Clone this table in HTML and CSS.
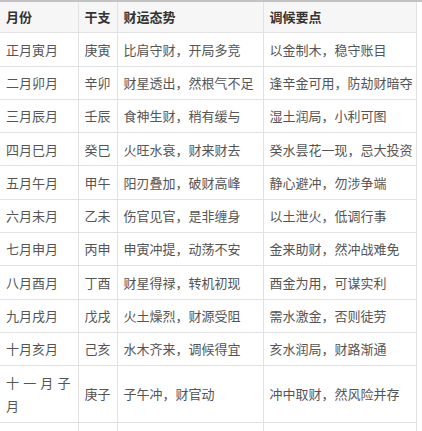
FILE: index.html
```html
<!DOCTYPE html>
<html lang="zh-CN">
<head>
<meta charset="utf-8">
<link rel="stylesheet" href="styles.css">
</head>
<body>
<div class="page">
<table class="fortune">
  <colgroup>
    <col class="c-month"><col class="c-gz"><col class="c-trend"><col class="c-tip">
  </colgroup>
  <thead>
    <tr><th>月份</th><th>干支</th><th>财运态势</th><th>调候要点</th></tr>
  </thead>
  <tbody>
    <tr><td class="month">正月寅月</td><td>庚寅</td><td>比肩守财，开局多竞</td><td>以金制木，稳守账目</td></tr>
    <tr><td class="month">二月卯月</td><td>辛卯</td><td>财星透出，然根气不足</td><td>逢辛金可用，防劫财暗夺</td></tr>
    <tr><td class="month">三月辰月</td><td>壬辰</td><td>食神生财，稍有缓与</td><td>湿土润局，小利可图</td></tr>
    <tr><td class="month">四月巳月</td><td>癸巳</td><td>火旺水衰，财来财去</td><td>癸水昙花一现，忌大投资</td></tr>
    <tr><td class="month">五月午月</td><td>甲午</td><td>阳刃叠加，破财高峰</td><td>静心避冲，勿涉争端</td></tr>
    <tr><td class="month">六月未月</td><td>乙未</td><td>伤官见官，是非缠身</td><td>以土泄火，低调行事</td></tr>
    <tr><td class="month">七月申月</td><td>丙申</td><td>申寅冲提，动荡不安</td><td>金来助财，然冲战难免</td></tr>
    <tr><td class="month">八月酉月</td><td>丁酉</td><td>财星得禄，转机初现</td><td>酉金为用，可谋实利</td></tr>
    <tr><td class="month">九月戌月</td><td>戊戌</td><td>火土燥烈，财源受阻</td><td>需水激金，否则徒劳</td></tr>
    <tr><td class="month">十月亥月</td><td>己亥</td><td>水木齐来，调候得宜</td><td>亥水润局，财路渐通</td></tr>
    <tr><td class="month">十一月子月</td><td>庚子</td><td>子午冲，财官动</td><td>冲中取财，然风险并存</td></tr>
    <tr class="tail"><td></td><td></td><td></td><td></td></tr>
  </tbody>
</table>
</div>
</body>
</html>
```

FILE: styles.css
```css
html, body {
  margin: 0;
  padding: 0;
  background: #ffffff;
  overflow: hidden;
}

.page {
  border-top: 2px solid #c2c2c2;
  font-family: "Noto Sans CJK SC", "Noto Sans", sans-serif;
  font-size: 13px;
  color: #555555;
}

.fortune {
  border-collapse: collapse;
  table-layout: fixed;
  width: 416px;
}

.c-month { width: 78px; }
.c-gz { width: 39px; }
.c-trend { width: 146px; }
.c-tip { width: 153px; }

.fortune th,
.fortune td {
  border: 1px solid #e2e2e2;
  padding: 4.45px 2px 4.45px 6px;
  line-height: 23.4px;
  text-align: left;
  vertical-align: middle;
  white-space: normal;
}

.fortune thead th {
  border-top: none;
  background: #f6f6f6;
  color: #333333;
  font-weight: bold;
  padding-top: 3.45px;
  padding-bottom: 3.45px;
}

.fortune th:first-child,
.fortune td:first-child {
  border-left: none;
}

.fortune td.month {
  text-align: justify;
  padding-right: 7px;
}

.fortune tr.tail td {
  height: 40px;
}
```
